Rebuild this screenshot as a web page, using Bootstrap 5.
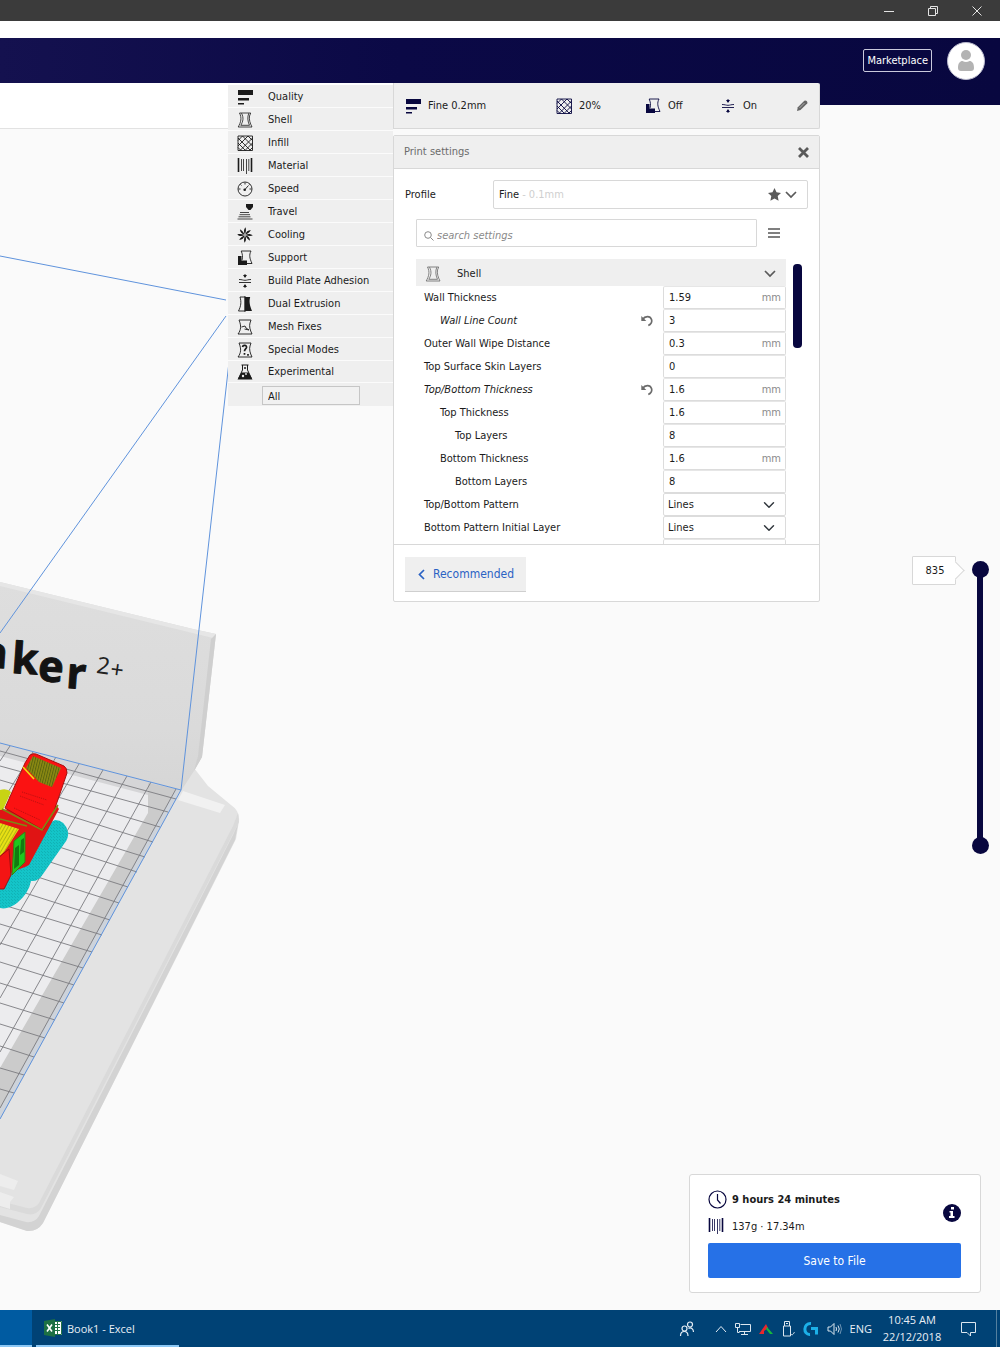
<!DOCTYPE html>
<html lang="en">
<head>
<meta charset="utf-8">
<meta name="viewport" content="width=device-width, initial-scale=1">
<title>Print settings</title>
<link rel="stylesheet" href="https://cdn.jsdelivr.net/npm/bootstrap@5.3.0/dist/css/bootstrap.min.css">
<style>
:root{--navy:#08073f;--line:#d8d8d8;--ink:#1b1b1b}
body{font-family:"DejaVu Sans Condensed","DejaVu Sans",sans-serif;font-size:11px;line-height:16px;color:var(--ink);background:#fafafa}
svg{display:block;flex:none}
button,input,select{font-family:inherit;color:inherit}
.ic{width:16px;height:16px}
.titlebar{height:21px;background:#3b3b3b;color:#e4e4e4;padding-right:18px;gap:34px}
.menustrip{height:17px;background:#fff}
.topbar{height:67px;background:linear-gradient(90deg,#14114f,#0b0946 40%,#08073f);padding:0 15px 22px 0;gap:15px}
.market{border:1px solid #c9c9dc;border-radius:2px;color:#fff;background:none;height:23px;padding:0 3px}
.avatar{width:38px;height:38px;border-radius:50%;background:#fff;border:1px solid #b9b9cc}
.workspace{margin-top:-22px;position:relative}
.scene{position:absolute;left:0;top:0;z-index:0}
.layer{position:relative;z-index:1}
.stagebar{width:228px;height:46px;background:#fff;border-bottom:1px solid #e2e2e2}
.categories{width:165px;background:#fff;padding-top:2px}
.cat-item{height:23px;border:0;border-bottom:1px solid #fbfbfb;background:#efefef;padding:1px 9px 0;gap:15px;text-align:left}
.cat-last{height:22px}
.cat-all{height:23px;background:#efefef;padding:3px 33px 0 34px}
.cat-all input{height:19px;border:1px solid #c6c6c6;background:#f1f1f1;padding:1px 5px 0}
.settings{width:427px}
.summary{height:46px;background:#efefef;border:1px solid var(--line);border-top:0;border-radius:0 2px 2px 0;padding:0 11px;color:var(--ink)}
.summary div{gap:7px}
.s-profile{width:151px}.s-infill{width:89px}.s-support{width:75px}
.summary svg{color:var(--navy)}
.panel{margin-top:6px;background:#fff;border:1px solid var(--line);border-radius:2px}
.panel-head{height:33px;background:#efefef;border-bottom:1px solid var(--line);padding:0 10px;color:#6b6b6b}
.plain{border:0;background:none;padding:0}
.profile-row{padding:11px 11px 0 11px}
.profile-row label{width:88px}
.profile-btn{height:29px;border:1px solid var(--line);background:#fff;border-radius:2px;padding:0 10px 0 5px;text-align:left}
.layer-height{color:#cfcfcf}
.search-row{padding:10px 39px 0 22px;gap:11px}
.search-box{height:28px;border:1px solid var(--line);border-radius:1px;padding:6px 6px 0 7px;gap:3px}
.search-box input{border:0;outline:0;width:100%;padding:0;font-style:italic;background:none}
.search-box input::placeholder{color:#8a8a8a;opacity:1}
.list-area{height:298px;overflow:hidden;padding:12px 17px 0 22px;border-bottom:1px solid var(--line);gap:7px}
.group-head{height:27px;width:100%;background:#efefef;border:0;padding:3px 10px 0 9px;gap:16px;text-align:left}
.setting{height:23px;padding-left:8px}
.setting label{color:var(--ink)}
.ind1{padding-left:24px}.ind2{padding-left:39px}
.changed label{font-style:italic}
.changed .plain{margin-right:10px}
.field{width:123px;height:23px;border:1px solid #dcdcdc;border-top-color:#e6e6e6;border-radius:2px;background:#fff;padding:0 4px 0 5px}
.field input{width:100%;border:0;outline:0;padding:0;background:none}
.field span{color:#8b8b8b}
.field-select{width:123px;height:23px;min-height:0;border:1px solid #dcdcdc;border-radius:2px;font-size:11px;line-height:16px;padding:2px 24px 2px 4px;background-color:#fff;background-size:12px 12px;background-position:right 10px center;color:var(--ink)}
.thumb{width:9px;height:84px;border-radius:4px;background:var(--navy);margin-top:5px}
.panel-foot{padding:12px 11px 9px}
.recommend{height:35px;background:#efefef;border:0;border-bottom:1px solid #cfcfcf;color:#2a62c4;font-size:12px;padding:0 12px 0 13px;gap:8px}
.layers{padding:473px 11px 0 0;gap:15px}
.tagbox{position:relative;width:44px;height:29px;border:1px solid var(--line);background:#fff;text-align:center;line-height:27px;border-radius:1px;padding-left:2px}
.tagbox::after{content:"";position:absolute;right:-7px;top:7px;width:13px;height:13px;background:#fff;border-top:1px solid var(--line);border-right:1px solid var(--line);transform:rotate(45deg)}
.range-pair{position:relative;width:18px;height:293px;margin-top:5px}
.range-pair::before{content:"";position:absolute;left:6px;top:8px;bottom:8px;width:6px;background:var(--navy)}
.range-pair input{position:absolute;left:0;top:293px;width:293px;height:18px;margin:0;appearance:none;background:none;transform-origin:0 0;transform:rotate(-90deg);pointer-events:none}
.range-pair input::-webkit-slider-thumb{appearance:none;width:17px;height:17px;border-radius:50%;background:var(--navy);pointer-events:auto}
.job{width:292px;background:#fff;border:1px solid var(--line);border-radius:3px;margin:0 19px 17px 0;padding:15px 19px 14px 18px}
.job svg{color:var(--navy)}
.save{width:100%;height:35px;border:0;border-radius:2px;background:#2671e7;color:#fff;font-size:12px;margin-top:7px}
.taskbar{height:37px;background:#004275;color:#e9eff5;font-family:"Open Sans","Noto Sans",sans-serif;line-height:17px}
.task-on{width:32px;background:#005ba1;border-bottom:2px solid #8cc8f5}
.task-app{width:143px;margin-left:4px;border:0;border-bottom:2px solid #8cc8f5;background:none;color:inherit;padding:1px 0 0 7px;gap:4px}
.tray{gap:8px}
.clock{width:64px;text-align:center;margin-top:-2px}
.deskedge{width:4px;border-left:1px solid #54809f;margin-left:11px}
</style>
<script src="https://cdn.jsdelivr.net/npm/bootstrap@5.3.0/dist/js/bootstrap.bundle.min.js"></script>
</head>
<body>
<svg width="0" height="0" class="position-absolute" aria-hidden="true">
<defs>
<symbol id="quality" viewBox="0 0 16 16"><path fill="currentColor" d="M1 1h15v5H1zM1 9h11v2.400H1zM1 14h6v1.500H1z"/></symbol>
<symbol id="shell" viewBox="0 0 16 16"><g fill="none" stroke="currentColor" stroke-width=".8"><path d="M2.500 1h11.200l-1.200 3c-.5 4 .5 7 2.500 11H1.200C4 10 5 6 2.500 1z"/><path d="M4.500 1.200C7 6 6 9.500 3.800 13.300h8.700C10.500 9 10.300 5 11.800 1.200"/></g></symbol>
<symbol id="infill" viewBox="0 0 16 16"><g fill="none" stroke="currentColor" stroke-width=".9"><path d="M1 1h14.500v14.500H1z"/><path d="M1 5.500L5.500 1M1 11L11 1M3 15.500L15.500 3M8 15.500l7.500-7.500M12.500 15.500l3-3M11 1l4.500 4.500M5.500 1l10 10M1 3l12.500 12.500M1 8l7.500 7.500M1 12.500l3 3"/></g></symbol>
<symbol id="material" viewBox="0 0 16 16"><path fill="none" stroke="currentColor" stroke-width="1.600" d="M1.500 0v14M14.500 0v14"/><path fill="none" stroke="currentColor" stroke-width=".8" d="M4.500 1v12M6.500 1v12M9.500 1v15M11.800 1v12"/></symbol>
<symbol id="speed" viewBox="0 0 16 16"><circle cx="8" cy="8" r="7" fill="none" stroke="currentColor" stroke-width=".9"/><path d="M8 1.500v2M1.500 8h2M12.500 8h2M3.500 3.500l1 1M12.500 3.500l-1 1M8 8.500l3-3.500" stroke="currentColor" stroke-width=".9" fill="none"/><circle cx="7.700" cy="8.700" r="1.300" fill="currentColor"/></symbol>
<symbol id="travel" viewBox="0 0 16 16"><path fill="currentColor" d="M9 0h7v3l-2.500 3h-2L9 3z"/><path d="M3 8.500h9M2.500 10.700H13M1.500 12.800h12M.5 15h15" stroke="currentColor" fill="none" stroke-width=".8"/></symbol>
<symbol id="cooling" viewBox="0 0 16 16"><g fill="currentColor"><path id="bl" d="M8 7.500C6.500 5 6.500 2.500 8.500.3c.8 2.200.5 4.700-.5 7.200z"/><use href="#bl" transform="rotate(45 8 8)"/><use href="#bl" transform="rotate(90 8 8)"/><use href="#bl" transform="rotate(135 8 8)"/><use href="#bl" transform="rotate(180 8 8)"/><use href="#bl" transform="rotate(225 8 8)"/><use href="#bl" transform="rotate(270 8 8)"/><use href="#bl" transform="rotate(315 8 8)"/></g></symbol>
<symbol id="support" viewBox="0 0 16 16"><path fill="currentColor" d="M1 6h3.500v4.500H10v4.500H1z"/><path fill="none" stroke="currentColor" stroke-width=".9" d="M5 10c1-3 .5-6-.8-9h9.800c-2 4-1.500 7 1 12.500H9.500"/></symbol>
<symbol id="adhesion" viewBox="0 0 16 16"><path fill="none" stroke="currentColor" stroke-width=".9" d="M2 6.500c3 0 4 .8 6 .8s3-.8 6-.8M2 9.500h12M8 1v3M8 12v3"/><path fill="currentColor" d="M6 2h4L8 5zM6 14h4l-2-3z"/></symbol>
<symbol id="dual" viewBox="0 0 16 16"><path fill="currentColor" d="M8 1h5.200c-1.200 4-.7 8 1.800 14H8z"/><path fill="none" stroke="currentColor" stroke-width=".9" d="M8 1H3c1.500 5 1 9-1.500 14H8zM8 0v16"/></symbol>
<symbol id="mesh" viewBox="0 0 16 16"><path fill="none" stroke="currentColor" stroke-width=".9" d="M2 1h12l-1 3c-1 3 0 7 2 11H1c3-4 3.500-8 1-14zM4.500 8L8 7l1 2 3 2-4.500-1"/></symbol>
<symbol id="special" viewBox="0 0 16 16"><path fill="none" stroke="currentColor" stroke-width=".9" d="M2 1h12l-1 3c-1 3 0 7 2 11H1c3-4 3.500-8 1-14z"/><path fill="none" stroke="currentColor" stroke-width="1.700" d="M5.500 5c.5-2.500 4.500-2 4 .5C9 7 7.500 7 7.500 9.300M7.500 11v1.700M11 12v1.700"/></symbol>
<symbol id="flask" viewBox="0 0 16 16"><path fill="none" stroke="currentColor" d="M4.500 1h7M5.500 1v5L1.500 14.500h13L10.500 6V1"/><path fill="currentColor" d="M4.500 8.500h7l4 7H.5z"/><circle cx="6" cy="12" r="1.200" fill="#efefef"/><circle cx="9" cy="10" r=".9" fill="#efefef"/><circle cx="8" cy="4" r="1" fill="currentColor"/></symbol>
<symbol id="chev" viewBox="0 0 12 8"><path d="M1 1l5 5 5-5" fill="none" stroke="#5a5a5a" stroke-width="1.700"/></symbol>
<symbol id="undo" viewBox="0 0 12 12"><path d="M1.500 4.500C4 1 9 .5 10.500 4.500c.8 2.500-.7 5-3.200 6" fill="none" stroke="#6b6b6b" stroke-width="1.700"/><path d="M.3 1v5h5z" fill="#6b6b6b"/></symbol>
</defs>
</svg>

<div class="min-vh-100 d-flex flex-column">
<div class="titlebar d-flex justify-content-end align-items-center">
<button class="plain" aria-label="Minimize"><svg width="10" height="10" stroke="#e4e4e4"><path d="M0 5.500h10"/></svg></button>
<button class="plain" aria-label="Restore"><svg width="10" height="10" stroke="#e4e4e4" fill="none"><path d="M.5 2.500h7v7h-7zM2.500 2.500v-2h7v7h-2"/></svg></button>
<button class="plain" aria-label="Close"><svg width="10" height="10" stroke="#e4e4e4"><path d="M.5.5l9 9M9.500.5l-9 9"/></svg></button>
</div>
<div class="menustrip"></div>
<header class="topbar d-flex justify-content-end align-items-center">
<button class="market">Marketplace</button>
<a href="#" class="avatar d-flex align-items-center justify-content-center" aria-label="Account"><svg width="18" height="24" fill="#b3b3b3"><circle cx="9" cy="6" r="5"/><path d="M1 19c0-5 2-7 4.500-7 2 1.300 5 1.300 7 0C15 12 17 14 17 19c0 2-1 3-3 3H4c-2 0-3-1-3-3z"/></svg></a>
</header>

<main class="workspace d-flex flex-column flex-grow-1">
<svg class="scene" width="245" height="1160" viewBox="0 83 245 1160" aria-hidden="true">
<defs>
<linearGradient id="wall" x1="0" y1="0" x2="0" y2="1"><stop offset="0" stop-color="#dedede"/><stop offset=".7" stop-color="#dadada"/><stop offset="1" stop-color="#d6d6d6"/></linearGradient>
<pattern id="hatch" width="2.500" height="4" patternUnits="userSpaceOnUse" patternTransform="rotate(14)"><path fill="#8c8a12" d="M0 0h3v4H0z"/><path fill="#5a6410" d="M0 0h1v4H0z"/></pattern>
<pattern id="mesh-cyan" width="3" height="3" patternUnits="userSpaceOnUse"><path fill="#14c4c8" d="M0 0h3v3H0z"/><path fill="#10b2b6" d="M0 0h1v1H0zM2 2h1v1H2z"/></pattern>
<pattern id="yellow-top" width="3" height="3" patternUnits="userSpaceOnUse" patternTransform="rotate(30)"><path fill="#e8e014" d="M0 0h3v3H0z"/><path fill="#b0b814" d="M0 0h1v3H0z"/></pattern>
</defs>
<path fill="#e3e3e3" d="M0 760L194 768l14 18 23 19q9 6 8 16l-3 18L43 1223q-6 9-16 8L0 1222z"/>
<path fill="#d3d3d3" d="M238 824l-3 16L43 1223q-6 9-16 8L0 1222v-7l26 7q9 1 13-6L233 835z"/>
<path fill="#dadada" d="M238 813l1 9L41 1208q-5 8-14 6L0 1207v-6l27 7q8 1 12-5L233 826z"/>
<path fill="url(#wall)" d="M0 582l193 47 23 5-14 123-8 14-13 20L0 744z"/>
<path fill="#e6e6e6" d="M0 582l193 47 23 5-3 4L0 586z"/>
<path fill="#cfcfcf" d="M216 634l-14 123-8 14 4-15 13-117z"/>
<path fill="#ececee" d="M0 743l181 47L0 1119z"/>
<path fill="#d5d5d7" d="M0 743l181 47-33 5L0 756z"/>
<path fill="#cbcbcb" d="M148 783l33 7L0 1119v-51l148-255z"/>
<path fill="#cdd3db" d="M176 789l5 1L0 1119v-10z"/>
<path fill="#f1f1f1" d="M183 791l42 14-5 8-42-13z"/>
<path fill="#ededed" d="M0 1174l18 7-4 9-14-4zM0 1192l14 5-4 5v7l-10-3z"/>
<g fill="none" stroke="#7c7c80" stroke-width=".9">
<path d="M176 789L0 1108M151 782L0 1052M127 776L0 998M103 770L0 945M79 764L0 896M56 757L0 849M33 752L0 805M10 746L0 761"/>
<path d="M176 799L0 751M168 812L0 766M160 827L0 780M153 842L0 794M145 857L0 812M137 872L0 828M128 887L0 846M119 903L0 865M110 920L0 885M102 935L0 904M92 952L0 924M83 968L0 943M74 985L0 962M64 1003L0 983M55 1020L0 1003M45 1038L0 1024M34 1057L0 1046M24 1075L0 1068M14 1093L0 1089"/>
</g>
<path fill="none" stroke="#5f93dc" d="M0 256l226 44M226 316L0 633M229 362l-48 428L0 743M181 790L0 1119"/>
<path fill="url(#mesh-cyan)" d="M0 850l55-30q10 0 13 12 1 6-4 12l-21 30q-5 8-12 7-2 12-14 22-9 7-17 5z"/>
<path fill="#c8d414" d="M0 790q7-2 11 2L2 812H0z"/>
<path fill="#e01414" d="M0 810l56-5 3 4-30 56-4 2-13 5-10 16H0z"/>
<path fill="#fb1212" stroke="#a81010" d="M5 808l20-45 5-8q3-2 6-1l28 12q3 2 3 7l-13 38-11 19z"/>
<path fill="url(#hatch)" d="M33 756l28 12-9 19-8-3-5-2-13-14z"/>
<path fill="none" stroke="#f0e010" stroke-width="1.600" d="M23 767l11 12"/>
<path stroke="#b81010" stroke-dasharray="1 1" fill="none" d="M22 792l25 8M20 796l24 9M14 808l26 12"/>
<path fill="none" stroke="#7c8a12" stroke-width="1.500" d="M2 809l40 21 16-25M0 819l27 7"/>
<path fill="url(#yellow-top)" d="M0 823l19 6-14 22-5 5z"/>
<path fill="#1ec81e" stroke="#3f7a10" d="M14 841l11-9v30l-13 13z"/>
<path fill="#127c12" d="M15 848l4-3v20l-5 4zM21 840l3-2v14l-4 3z"/>
<path fill="#f41414" stroke="#9c1010" d="M-2 858l11-9 2 26-7 14h-6z"/>
<text transform="rotate(4 0 668)" x="-19 11 38 67" y="668 672 678 683" font-family="Noto Sans,sans-serif" font-weight="700" font-size="43" fill="#131313" stroke="#131313" stroke-linejoin="round">aker</text>
<text transform="rotate(8 97 672)" x="96 110" y="673 675" font-family="Noto Sans,sans-serif" font-weight="400" font-size="23" fill="#222">2+</text>
</svg>

<div class="layer d-flex align-items-start">
<div class="stagebar flex-shrink-0"></div>
<nav class="categories d-flex flex-column flex-shrink-0" aria-label="Categories">
<button class="cat-item d-flex align-items-center"><svg class="ic"><use href="#quality"/></svg>Quality</button>
<button class="cat-item d-flex align-items-center"><svg class="ic"><use href="#shell"/></svg>Shell</button>
<button class="cat-item d-flex align-items-center"><svg class="ic"><use href="#infill"/></svg>Infill</button>
<button class="cat-item d-flex align-items-center"><svg class="ic"><use href="#material"/></svg>Material</button>
<button class="cat-item d-flex align-items-center"><svg class="ic"><use href="#speed"/></svg>Speed</button>
<button class="cat-item d-flex align-items-center"><svg class="ic"><use href="#travel"/></svg>Travel</button>
<button class="cat-item d-flex align-items-center"><svg class="ic"><use href="#cooling"/></svg>Cooling</button>
<button class="cat-item d-flex align-items-center"><svg class="ic"><use href="#support"/></svg>Support</button>
<button class="cat-item d-flex align-items-center"><svg class="ic"><use href="#adhesion"/></svg>Build Plate Adhesion</button>
<button class="cat-item d-flex align-items-center"><svg class="ic"><use href="#dual"/></svg>Dual Extrusion</button>
<button class="cat-item d-flex align-items-center"><svg class="ic"><use href="#mesh"/></svg>Mesh Fixes</button>
<button class="cat-item d-flex align-items-center"><svg class="ic"><use href="#special"/></svg>Special Modes</button>
<button class="cat-item cat-last d-flex align-items-center"><svg class="ic"><use href="#flask"/></svg>Experimental</button>
<div class="cat-all"><input class="w-100" type="text" value="All" aria-label="Filter"></div>
</nav>

<section class="settings flex-shrink-0">
<div class="summary d-flex align-items-center">
<div class="s-profile d-flex align-items-center"><svg class="ic"><use href="#quality"/></svg><span>Fine 0.2mm</span></div>
<div class="s-infill d-flex align-items-center"><svg class="ic"><use href="#infill"/></svg><span>20%</span></div>
<div class="s-support d-flex align-items-center"><svg class="ic"><use href="#support"/></svg><span>Off</span></div>
<div class="d-flex align-items-center"><svg class="ic"><use href="#adhesion"/></svg><span>On</span></div>
<button class="plain ms-auto" aria-label="Edit"><svg width="11" height="11" fill="#666"><path d="M0 11l.8-3.800L7.300.8q1.200-.8 2.400.2T10.200 3.500L3.500 10z"/><path d="M2.500 8l5-5" stroke="#ccc" stroke-width=".7"/></svg></button>
</div>
<div class="panel">
<div class="panel-head d-flex align-items-center justify-content-between"><span>Print settings</span><button class="plain" aria-label="Close panel"><svg width="11" height="11" stroke="#595959" stroke-width="2.800"><path d="M1 1l9 9M10 1l-9 9"/></svg></button></div>
<div class="profile-row d-flex align-items-center"><label for="profile">Profile</label>
<button id="profile" class="profile-btn flex-grow-1 d-flex align-items-center"><span>Fine <span class="layer-height">- 0.1mm</span></span><svg class="ms-auto me-1" width="13" height="13" viewBox="0 0 13 13" fill="#5a5a5a"><path d="M6.500 0l2 4.300 4.500.6-3.300 3.200.9 4.700-4.100-2.300-4.100 2.300.9-4.700L0 4.900l4.500-.6z"/></svg><svg width="12" height="8"><use href="#chev"/></svg></button></div>
<div class="search-row d-flex align-items-center">
<div class="search-box d-flex align-items-center flex-grow-1"><svg width="10" height="10" fill="none" stroke="#8a8a8a"><circle cx="4" cy="4" r="3.300"/><path d="M6.500 6.500l3 3"/></svg><input type="search" placeholder="search settings" aria-label="Search settings"></div>
<button class="plain" aria-label="Visibility menu"><svg width="12" height="10" stroke="#555" stroke-width="1.700"><path d="M0 1h12M0 5h12M0 9h12"/></svg></button>
</div>
<div class="list-area d-flex align-items-start">
<div class="flex-grow-1">
<button class="group-head d-flex align-items-center"><svg class="ic" style="color:#666"><use href="#shell"/></svg><span class="flex-grow-1">Shell</span><svg width="12" height="8"><use href="#chev"/></svg></button>
<div class="setting d-flex align-items-center justify-content-between"><label for="f1">Wall Thickness</label><div class="field d-flex align-items-center"><input id="f1" value="1.59"><span>mm</span></div></div>
<div class="setting ind1 changed d-flex align-items-center"><label for="f2" class="me-auto">Wall Line Count</label><button class="plain" aria-label="Reset"><svg width="12" height="12"><use href="#undo"/></svg></button><div class="field d-flex align-items-center"><input id="f2" value="3"></div></div>
<div class="setting d-flex align-items-center justify-content-between"><label for="f3">Outer Wall Wipe Distance</label><div class="field d-flex align-items-center"><input id="f3" value="0.3"><span>mm</span></div></div>
<div class="setting d-flex align-items-center justify-content-between"><label for="f4">Top Surface Skin Layers</label><div class="field d-flex align-items-center"><input id="f4" value="0"></div></div>
<div class="setting changed d-flex align-items-center"><label for="f5" class="me-auto">Top/Bottom Thickness</label><button class="plain" aria-label="Reset"><svg width="12" height="12"><use href="#undo"/></svg></button><div class="field d-flex align-items-center"><input id="f5" value="1.6"><span>mm</span></div></div>
<div class="setting ind1 d-flex align-items-center justify-content-between"><label for="f6">Top Thickness</label><div class="field d-flex align-items-center"><input id="f6" value="1.6"><span>mm</span></div></div>
<div class="setting ind2 d-flex align-items-center justify-content-between"><label for="f7">Top Layers</label><div class="field d-flex align-items-center"><input id="f7" value="8"></div></div>
<div class="setting ind1 d-flex align-items-center justify-content-between"><label for="f8">Bottom Thickness</label><div class="field d-flex align-items-center"><input id="f8" value="1.6"><span>mm</span></div></div>
<div class="setting ind2 d-flex align-items-center justify-content-between"><label for="f9">Bottom Layers</label><div class="field d-flex align-items-center"><input id="f9" value="8"></div></div>
<div class="setting d-flex align-items-center justify-content-between"><label for="f10">Top/Bottom Pattern</label><select id="f10" class="form-select field-select"><option>Lines</option></select></div>
<div class="setting d-flex align-items-center justify-content-between"><label for="f11">Bottom Pattern Initial Layer</label><select id="f11" class="form-select field-select"><option>Lines</option></select></div>
<div class="setting d-flex align-items-center justify-content-end"><div class="field"></div></div>
</div>
<div class="thumb flex-shrink-0"></div>
</div>
<div class="panel-foot"><button class="recommend d-flex align-items-center"><svg width="7" height="11" fill="none" stroke="#2a62c4" stroke-width="1.700"><path d="M6 1L1.500 5.500 6 10"/></svg>Recommended</button></div>
</div>
</section>

<div class="layers flex-grow-1 d-flex justify-content-end align-items-start">
<output class="tagbox">835</output>
<div class="range-pair"><input type="range" min="0" max="835" value="835" aria-label="Top layer"><input type="range" min="0" max="835" value="0" aria-label="Bottom layer"></div>
</div>
</div>

<section class="job layer mt-auto align-self-end">
<div class="d-flex align-items-center">
<div class="flex-grow-1">
<div class="d-flex align-items-center gap-1"><svg width="20" height="20" fill="none" stroke="currentColor" stroke-width="1.200"><circle cx="9.500" cy="9.500" r="8.500"/><path d="M9.500 4v6l3 3.500"/></svg><strong>9 hours 24 minutes</strong></div>
<div class="d-flex align-items-center gap-1 mt-2"><svg width="20" height="18" viewBox="0 0 20 18"><use href="#material" width="16" height="16"/></svg><span>137g · 17.34m</span></div>
</div>
<button class="plain" aria-label="Details"><svg width="18" height="18"><circle cx="9" cy="9" r="9" fill="currentColor"/><path fill="#fff" d="M8 3h3v2.500H8zM6.500 7H10v5h1.500v2H6v-2h1.500V8.500h-1z"/></svg></button>
</div>
<button class="save">Save to File</button>
</section>
</main>

<footer class="taskbar d-flex">
<div class="task-on"></div>
<button class="task-app d-flex align-items-center"><svg width="20" height="18"><path fill="#fff" d="M10 2h9v14h-9z"/><path stroke="#217346" fill="none" d="M11 2.500h7.500v13H11M12 5.500h5M12 8.500h5M12 11.500h5M14.500 3v12"/><path fill="#1d7044" d="M1 2l11-2v18L1 16z"/><path stroke="#fff" stroke-width="1.600" d="M4 5.500l5 7M9 5.500l-5 7"/></svg>Book1 - Excel</button>
<div class="tray d-flex align-items-center ms-auto">
<svg class="me-2" width="16" height="16" fill="none" stroke="#e4edf5" stroke-width="1.200"><circle cx="5.500" cy="7.500" r="2.500"/><path d="M1.500 15c0-6 7.500-6 7.500 0"/><circle cx="11" cy="3.500" r="2.500"/><path d="M9.500 7.500C12 6 14.500 8 14.500 11"/></svg>
<svg class="ms-1" width="12" height="8" fill="none" stroke="#e4edf5"><path d="M1 7l5-5.500L11 7"/></svg>
<svg width="16" height="14" fill="none" stroke="#dbe6ef"><path d="M5.500 2.500h10v7H4M6 12.500h7M9.500 9.500v3M.5 1.500h4v4h-4zM2.500 5.500v5h2"/></svg>
<svg width="15" height="14"><path fill="#e8262c" d="M0 12L7 2l2 4-4 3v3z"/><path fill="#16b83c" d="M8 5l6 7h-3L7 7z"/></svg>
<svg width="13" height="16" fill="none" stroke="#dbe6ef"><path d="M2.500 5V.5h5V5M1.500 5h7v10h-7zM4 2.500h2M9 13c1 2 2.500 0 3.500-2"/></svg>
<svg width="16" height="16" fill="none" stroke="#1cb0e8" stroke-width="3"><path d="M8 2.500C0 2 0 14 7 13.500M8 7.500h5.500v6"/></svg>
<svg width="15" height="14" fill="none" stroke="#dbe6ef"><path d="M1 5h2.500L7 1.500v11L3.500 9H1zM9 5q1 2 0 4M11 3.500q2.500 3.500 0 7"/><path stroke="#6c93b2" d="M13 2q3 5 0 10"/></svg>
<span>ENG</span>
<time class="clock">10:45 AM<br>22/12/2018</time>
<svg class="ms-2" width="17" height="16" fill="none" stroke="#dbe6ef"><path d="M1.500 1.500h14v10h-5v3.500L7 11.500H1.500z"/></svg>
<div class="deskedge align-self-stretch"></div>
</div>
</footer>
</div>
</body>
</html>
